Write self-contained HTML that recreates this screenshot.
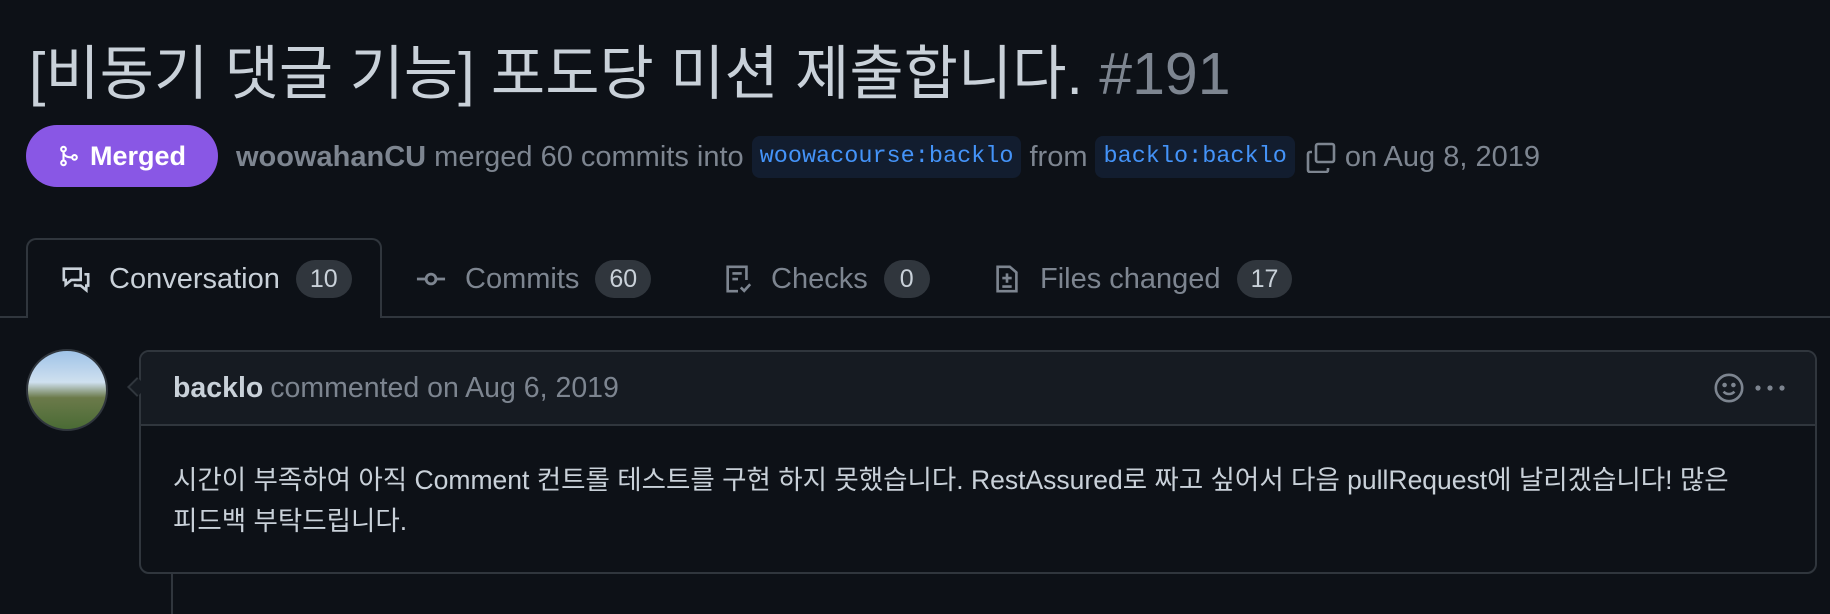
<!DOCTYPE html>
<html><head><meta charset="utf-8"><style>
*{box-sizing:border-box;margin:0;padding:0}
body{width:1830px;height:608px;background:#0d1117;font-family:"Liberation Sans","Noto Sans CJK KR",sans-serif;color:#c9d1d9;position:relative;overflow:hidden}
.abs{position:absolute}
.title{left:29px;top:36px;font-size:59px;color:#c9d1d9;white-space:nowrap;line-height:76px}
.title span{color:#7d8590}
.badge{left:26px;top:125px;width:192px;height:62px;border-radius:31px;background:#8957e5;color:#fff;font-size:27px;font-weight:bold;display:flex;align-items:center;justify-content:center;gap:10px}
.meta{left:236px;top:136px;font-size:29px;color:#7d8590;display:flex;align-items:center;white-space:nowrap;height:42px}
.meta b{color:#7d8590}
.code{font-family:"Liberation Mono",monospace;color:#4493f8;background:#121d2f;border-radius:8px;padding:0 8px;height:42px;line-height:42px;font-size:23.5px;margin:0 8px}
.tabline{left:0;top:316px;width:1830px;height:2px;background:#30363d}
.activetab{left:26px;top:238px;width:356px;height:80px;border:2px solid #30363d;border-bottom:none;border-radius:10px 10px 0 0;background:#0d1117}
.tab{top:258px;height:42px;display:flex;align-items:center;font-size:29px;color:#7d8590;white-space:nowrap}
.tab.on{color:#c9d1d9}
.cnt{background:#30363d;color:#c9d1d9;border-radius:20px;height:38px;min-width:46px;padding:0 14px;margin-left:16px;display:flex;align-items:center;justify-content:center;font-size:25px}
.tab svg{margin-right:18px}
.avatar{left:26px;top:349px;width:82px;height:82px;border-radius:50%;background:linear-gradient(#9fc3e8 0%,#cfe0ef 40%,#6b7a4a 60%,#4a6b35 100%);border:2px solid #30363d}
.box{left:139px;top:350px;width:1678px;height:224px;border:2px solid #30363d;border-radius:10px;overflow:hidden}
.hdr{height:74px;background:#161b22;border-bottom:2px solid #30363d;display:flex;align-items:center;padding-left:32px;font-size:28.5px;color:#7d8590}
.hdr b{color:#c9d1d9;margin-right:7px}
.bodytxt{padding:34px 32px 20px;font-size:26.5px;line-height:41px;color:#c9d1d9;white-space:nowrap}
.vline{left:171px;top:574px;width:2px;height:40px;background:#30363d}
.arrow{left:130px;top:380px;width:14px;height:14px;background:#161b22;border-left:2px solid #30363d;border-bottom:2px solid #30363d;transform:rotate(45deg)}
</style></head><body>
<div class="abs title">[비동기 댓글 기능] 포도당 미션 제출합니다. <span>#191</span></div>
<div class="abs badge"><svg width="22" height="26" viewBox="0 0 16 16" fill="none" stroke="#fff" stroke-width="1.5"><circle cx="4" cy="3" r="1.7"/><circle cx="4" cy="13" r="1.7"/><circle cx="12" cy="9" r="1.7"/><path d="M4 4.7v6.6M4 5c0 3 3 4 6.3 4"/></svg>Merged</div>
<div class="abs meta"><b>woowahanCU</b>&nbsp;merged 60 commits into <span class="code">woowacourse:backlo</span> from <span class="code">backlo:backlo</span><svg width="32" height="32" viewBox="0 0 16 16" fill="none" stroke="#7d8590" stroke-width="1.3" style="margin:0 8px 0 2px"><rect x="5.5" y="1.5" width="9" height="9" rx="1"/><path d="M3.5 5.5h-1a1 1 0 0 0-1 1v8a1 1 0 0 0 1 1h8a1 1 0 0 0 1-1v-1"/></svg>on Aug 8, 2019</div>
<div class="abs tabline"></div>
<div class="abs activetab"></div>
<div class="abs tab on" style="left:61px"><svg width="30" height="30" viewBox="0 0 16 16" fill="none" stroke="#c9d1d9" stroke-width="1.4"><path d="M1.5 2.5h9v6h-5l-3 2.5v-2.5h-1z"/><path d="M12.5 5.5h2v6h-1v2.5l-3-2.5h-3v-1"/></svg>Conversation<span class="cnt">10</span></div>
<div class="abs tab" style="left:415px"><svg width="32" height="30" viewBox="0 0 16 16" fill="none" stroke="#7d8590" stroke-width="1.5"><circle cx="8" cy="8" r="2.6"/><path d="M0.5 8h4.9M10.6 8h4.9"/></svg>Commits<span class="cnt">60</span></div>
<div class="abs tab" style="left:723px"><svg width="30" height="30" viewBox="0 0 16 16" fill="none" stroke="#7d8590" stroke-width="1.4"><path d="M8 14.5H2.5v-13h10v7"/><path d="M5 5h5M5 8h3"/><path d="M9.5 12.5l1.8 1.8 3.2-3.5"/></svg>Checks<span class="cnt">0</span></div>
<div class="abs tab" style="left:992px"><svg width="30" height="30" viewBox="0 0 16 16" fill="none" stroke="#7d8590" stroke-width="1.4"><path d="M9.5 1.5h-6.5v13h10v-10z"/><path d="M8 5v5M5.5 7.5h5M5.5 12h5"/></svg>Files changed<span class="cnt">17</span></div>
<div class="abs avatar"></div>
<div class="abs box"><div class="hdr"><b>backlo</b> commented on Aug 6, 2019
<svg style="position:absolute;right:70px" width="32" height="32" viewBox="0 0 16 16" fill="none" stroke="#7d8590" stroke-width="1.3"><circle cx="8" cy="8" r="6.6"/><circle cx="5.8" cy="6.5" r=".5" fill="#7d8590"/><circle cx="10.2" cy="6.5" r=".5" fill="#7d8590"/><path d="M5.3 9.8c1.4 1.6 4 1.6 5.4 0"/></svg>
<svg style="position:absolute;right:28px" width="34" height="10" viewBox="0 0 34 10"><circle cx="5" cy="5" r="2.6" fill="#7d8590"/><circle cx="17" cy="5" r="2.6" fill="#7d8590"/><circle cx="29" cy="5" r="2.6" fill="#7d8590"/></svg></div>
<div class="bodytxt">시간이 부족하여 아직 Comment 컨트롤 테스트를 구현 하지 못했습니다. RestAssured로 짜고 싶어서 다음 pullRequest에 날리겠습니다! 많은<br>피드백 부탁드립니다.</div></div>
<div class="abs arrow"></div>
<div class="abs vline"></div>
</body></html>
